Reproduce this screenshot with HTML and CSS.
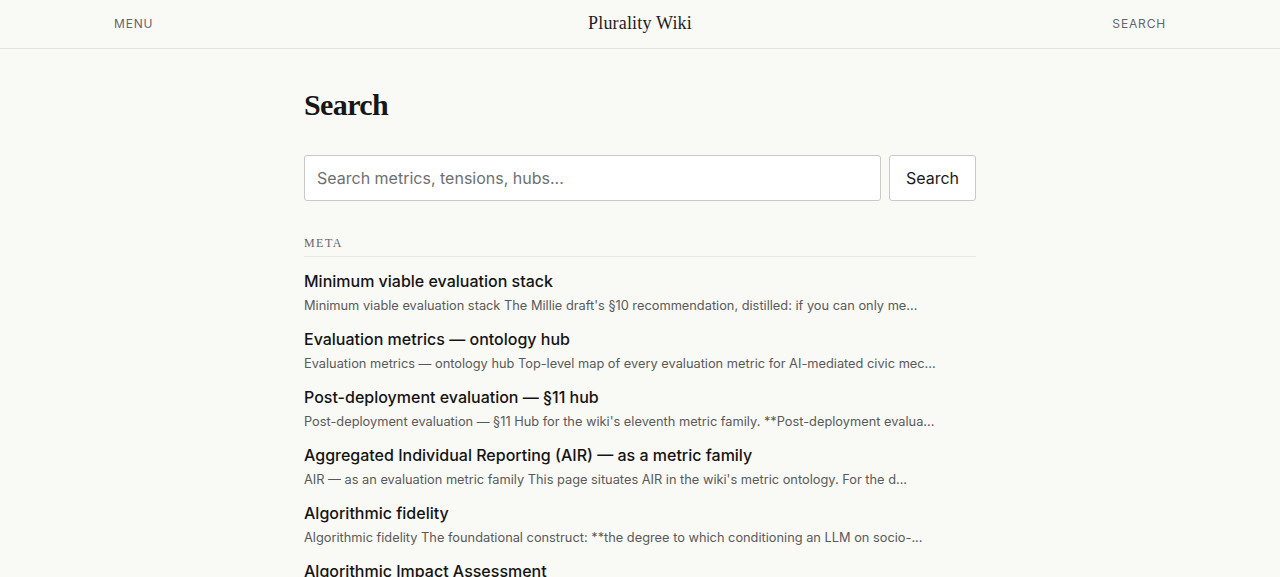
FILE: index.html
```html
<!DOCTYPE html>
<html lang="en">
<head>
<meta charset="utf-8">
<title>Search — Plurality Wiki</title>
<link rel="stylesheet" href="styles.css">
</head>
<body>
<header class="topbar">
  <div class="topbar-inner">
    <a class="nav-link nav-left" href="#">MENU</a>
    <a class="brand" href="#">Plurality Wiki</a>
    <a class="nav-link nav-right" href="#">SEARCH</a>
  </div>
</header>
<main class="page">
  <h1 class="page-title">Search</h1>
  <form class="search-form">
    <input class="search-input" type="text" placeholder="Search metrics, tensions, hubs...">
    <button class="search-button" type="button">Search</button>
  </form>
  <section class="group">
    <h2 class="group-label">Meta</h2>
    <ul class="results">
      <li class="result">
        <a class="result-title" href="#">Minimum viable evaluation stack</a>
        <p class="result-desc">Minimum viable evaluation stack The Millie draft's §10 recommendation, distilled: if you can only me...</p>
      </li>
      <li class="result">
        <a class="result-title" href="#">Evaluation metrics — ontology hub</a>
        <p class="result-desc">Evaluation metrics — ontology hub Top-level map of every evaluation metric for AI-mediated civic mec...</p>
      </li>
      <li class="result">
        <a class="result-title" href="#">Post-deployment evaluation — §11 hub</a>
        <p class="result-desc">Post-deployment evaluation — §11 Hub for the wiki's eleventh metric family. **Post-deployment evalua...</p>
      </li>
      <li class="result">
        <a class="result-title" href="#">Aggregated Individual Reporting (AIR) — as a metric family</a>
        <p class="result-desc">AIR — as an evaluation metric family This page situates AIR in the wiki's metric ontology. For the d...</p>
      </li>
      <li class="result">
        <a class="result-title" href="#">Algorithmic fidelity</a>
        <p class="result-desc">Algorithmic fidelity The foundational construct: **the degree to which conditioning an LLM on socio-...</p>
      </li>
      <li class="result">
        <a class="result-title" href="#">Algorithmic Impact Assessment</a>
        <p class="result-desc">Algorithmic Impact Assessment</p>
      </li>
    </ul>
  </section>
</main>
</body>
</html>
```

FILE: styles.css
```css
* { box-sizing: border-box; }
html, body {
  margin: 0;
  padding: 0;
  background: #f9f9f6;
  color: #1a1a1a;
  font-family: Inter, "Noto Sans", sans-serif;
}
a { color: inherit; text-decoration: none; }

.topbar {
  height: 49px;
  border-bottom: 1px solid #e3e3df;
}
.topbar-inner {
  max-width: 1052px;
  margin: 0 auto;
  height: 47px;
  display: grid;
  grid-template-columns: 1fr auto 1fr;
  align-items: center;
}
.nav-link {
  font-size: 12px;
  letter-spacing: 0.07em;
  color: #666;
}
.nav-left { justify-self: start; }
.nav-right { justify-self: end; }
.brand {
  font-family: "Liberation Serif", "DejaVu Serif", serif;
  font-size: 18px;
  color: #1f1f1f;
  letter-spacing: 0.01em;
}

.page {
  width: 672px;
  margin: 0 auto;
  padding-top: 38px;
}
.page-title {
  font-family: "Liberation Serif", "DejaVu Serif", serif;
  font-size: 30px;
  font-weight: 700;
  margin: 0 0 32px;
  line-height: 36px;
  letter-spacing: -0.02em;
  color: #161616;
}
.search-form {
  display: flex;
  gap: 8px;
  margin: 0 0 35px;
}
.search-input {
  flex: 1;
  height: 46px;
  border: 1px solid #c9c9c6;
  border-radius: 3px;
  background: #fff;
  padding: 0 12px 1px;
  font-family: Inter, sans-serif;
  font-size: 16px;
  color: #222;
}
.search-input::placeholder { color: #6f6f6f; }
.search-button {
  width: 87px;
  height: 46px;
  border: 1px solid #c9c9c6;
  border-radius: 3px;
  background: #fff;
  padding: 0 0 1px;
  font-family: Inter, sans-serif;
  font-size: 16px;
  color: #1a1a1a;
}
.group-label {
  font-family: "Liberation Serif", "DejaVu Serif", serif;
  font-size: 12px;
  font-weight: 400;
  letter-spacing: 0.12em;
  text-transform: uppercase;
  color: #666;
  margin: 0;
  padding-bottom: 5px;
  border-bottom: 1px solid #e6e6e2;
}
.results {
  list-style: none;
  margin: 0;
  padding: 12px 0 0;
}
.result {
  margin: 0 0 9px;
}
.result-title {
  display: block;
  font-size: 16px;
  font-weight: 500;
  line-height: 24px;
  color: #141414;
}
.result-desc {
  margin: 1px 0 0;
  font-size: 12.8px;
  line-height: 24px;
  color: #595959;
}
```
